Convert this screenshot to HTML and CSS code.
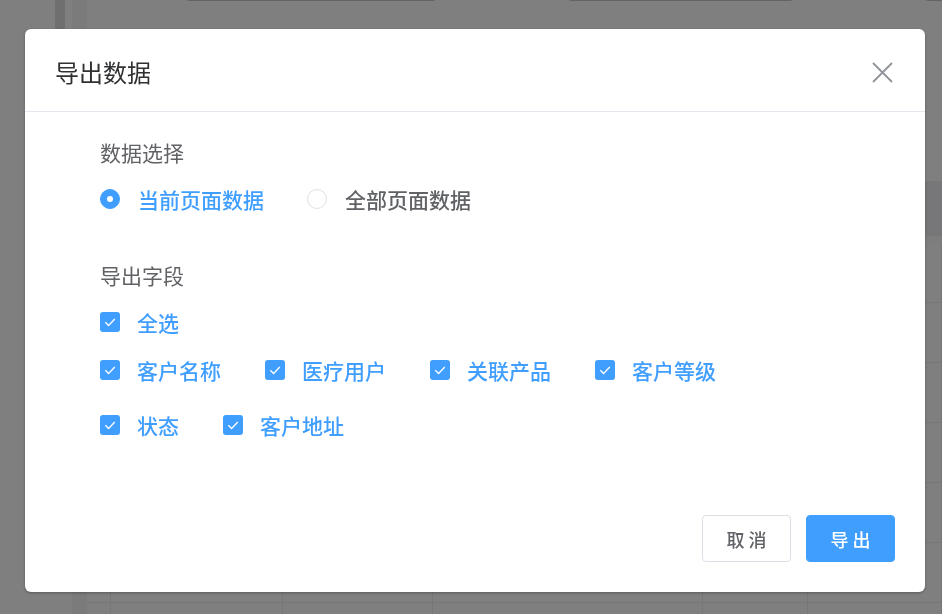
FILE: index.html
```html
<!DOCTYPE html>
<html>
    <head>
        <title>导出数据</title>
        <meta charset="UTF-8">
        <meta name="viewport" content="width=device-width, initial-scale=1.0">
        <link rel="stylesheet" href="styles.css">
    </head>
    <body>
        <!-- page behind the mask -->
        <div class="page">
            <div class="side-strip"></div>
            <div class="page-main">
                <div class="filters">
                    <div class="filter-input wide"></div>
                    <div class="filter-input mid"></div>
                    <div class="filter-input"></div>
                </div>
                <div class="table">
                    <div class="table-head"></div>
                    <div class="table-row"><span></span><span></span><span></span><span></span><span></span><span></span></div>
                    <div class="table-row"><span></span><span></span><span></span><span></span><span></span><span></span></div>
                    <div class="table-row"><span></span><span></span><span></span><span></span><span></span><span></span></div>
                    <div class="table-row"><span></span><span></span><span></span><span></span><span></span><span></span></div>
                    <div class="table-row"><span></span><span></span><span></span><span></span><span></span><span></span></div>
                    <div class="table-row"><span></span><span></span><span></span><span></span><span></span><span></span></div>
                    <div class="table-row"><span></span><span></span><span></span><span></span><span></span><span></span></div>
                </div>
            </div>
        </div>

        <div class="mask">
            <div class="dialog">
                <div class="dialog-header">
                    <span class="dialog-title">导出数据</span>
                    <button class="dialog-close" aria-label="关闭">
                        <svg width="21" height="21" viewBox="0 0 21 21">
                            <path d="M1 1 L20 20 M20 1 L1 20" stroke="#909399" stroke-width="1.8" fill="none"/>
                        </svg>
                    </button>
                </div>

                <div class="dialog-body">
                    <div class="field-label">数据选择</div>
                    <div class="radio-group">
                        <label class="radio checked"><span class="radio-inner"></span><span>当前页面数据</span></label>
                        <label class="radio"><span class="radio-inner"></span><span>全部页面数据</span></label>
                    </div>

                    <div class="field-label second">导出字段</div>
                    <div class="check-all">
                        <label class="checkbox"><span class="checkbox-inner"><svg width="20" height="20" viewBox="0 0 20 20"><polyline points="5.3,10.2 8.6,13.5 14.8,7" stroke="#fff" stroke-width="1.3" fill="none"/></svg></span><span>全选</span></label>
                    </div>
                    <div class="checkbox-group">
                        <label class="checkbox"><span class="checkbox-inner"><svg width="20" height="20" viewBox="0 0 20 20"><polyline points="5.3,10.2 8.6,13.5 14.8,7" stroke="#fff" stroke-width="1.3" fill="none"/></svg></span><span>客户名称</span></label>
                        <label class="checkbox"><span class="checkbox-inner"><svg width="20" height="20" viewBox="0 0 20 20"><polyline points="5.3,10.2 8.6,13.5 14.8,7" stroke="#fff" stroke-width="1.3" fill="none"/></svg></span><span>医疗用户</span></label>
                        <label class="checkbox"><span class="checkbox-inner"><svg width="20" height="20" viewBox="0 0 20 20"><polyline points="5.3,10.2 8.6,13.5 14.8,7" stroke="#fff" stroke-width="1.3" fill="none"/></svg></span><span>关联产品</span></label>
                        <label class="checkbox"><span class="checkbox-inner"><svg width="20" height="20" viewBox="0 0 20 20"><polyline points="5.3,10.2 8.6,13.5 14.8,7" stroke="#fff" stroke-width="1.3" fill="none"/></svg></span><span>客户等级</span></label>
                        <label class="checkbox"><span class="checkbox-inner"><svg width="20" height="20" viewBox="0 0 20 20"><polyline points="5.3,10.2 8.6,13.5 14.8,7" stroke="#fff" stroke-width="1.3" fill="none"/></svg></span><span>状态</span></label>
                        <label class="checkbox"><span class="checkbox-inner"><svg width="20" height="20" viewBox="0 0 20 20"><polyline points="5.3,10.2 8.6,13.5 14.8,7" stroke="#fff" stroke-width="1.3" fill="none"/></svg></span><span>客户地址</span></label>
                    </div>
                </div>

                <div class="dialog-footer">
                    <button class="btn">取 消</button>
                    <button class="btn btn-primary">导 出</button>
                </div>
            </div>
        </div>
    </body>
</html>
```

FILE: styles.css
```css
body {
    margin: 0;
    font-family: "Noto Sans CJK SC", "Noto Sans", sans-serif;
    background-color: #fff;
    overflow: hidden;
}

/* background page */
.page {
    display: flex;
    height: 614px;
    overflow: hidden;
}
.side-strip {
    align-self: flex-start;
    width: 10px;
    height: 30px;
    margin-left: 55px;
    background-color: #dedede;
}
.page-main {
    flex: 1;
    min-width: 0;
    overflow: hidden;
    padding-left: 15px;
    border-left: 7px solid #fff;
    background: linear-gradient(to right, #f7f7f7 0, #f7f7f7 15px, #fff 15px);
}
.filters {
    display: flex;
    gap: 130px;
    margin-top: -39px;
    padding-left: 98px;
}
.filter-input {
    flex: none;
    width: 250px;
    height: 38px;
    border: 1px solid #c8c8c8;
    border-radius: 4px;
    background-color: #fff;
}
.filter-input.mid {
    width: 225px;
}
.filter-input:last-child {
    width: 200px;
}
.table {
    margin-top: 180px;
}
.table-head {
    height: 55px;
    background-color: #eeeff2;
    border-bottom: 7px solid #fbfbfb;
}
.table-row {
    display: grid;
    grid-template-columns: 24px 172px 150px 270px 105px 1fr;
    height: 60px;
    border-bottom: 1px solid #ebeef5;
    box-sizing: border-box;
}
.table-row span {
    border-right: 1px solid #ebeef5;
}

/* modal */
.mask {
    position: fixed;
    top: 0;
    left: 0;
    right: 0;
    bottom: 0;
    background-color: rgba(0, 0, 0, 0.5);
}
.dialog {
    margin: 29px 0 0 25px;
    width: 900px;
    height: 563px;
    background-color: #fff;
    border-radius: 6px;
    box-shadow: 0 1px 3px rgba(0, 0, 0, 0.3);
    display: flex;
    flex-direction: column;
    box-sizing: border-box;
}
.dialog-header {
    display: flex;
    justify-content: space-between;
    align-items: center;
    padding: 27px 32px 23px 30px;
    border-bottom: 1px solid #e4e7ed;
}
.dialog-title {
    font-size: 24px;
    line-height: 32px;
    color: #303133;
}
.dialog-close {
    border: none;
    background: transparent;
    padding: 0;
    width: 21px;
    height: 21px;
    cursor: pointer;
    display: flex;
}
.dialog-body {
    flex: 1;
    padding: 25px 75px 0;
}
.field-label {
    font-size: 21px;
    line-height: 30px;
    color: #606266;
}
.field-label.second {
    margin-top: 46px;
}
.radio-group {
    display: flex;
    margin-top: 17px;
}
.radio {
    display: flex;
    align-items: center;
    gap: 18px;
    margin-right: 43px;
    font-size: 21px;
    line-height: 30px;
    font-weight: 500;
    color: #606266;
    cursor: pointer;
}
.radio-inner {
    width: 20px;
    height: 20px;
    border: 1px solid #dcdfe6;
    border-radius: 50%;
    box-sizing: border-box;
    display: flex;
    align-items: center;
    justify-content: center;
}
.radio.checked {
    color: #409eff;
}
.radio.checked .radio-inner {
    background-color: #409eff;
    border-color: #409eff;
}
.radio.checked .radio-inner::after {
    content: "";
    width: 6px;
    height: 6px;
    border-radius: 50%;
    background-color: #fff;
}
.check-all {
    display: flex;
    margin-top: 17px;
}
.checkbox-group {
    display: flex;
    flex-wrap: wrap;
    row-gap: 25px;
    margin-top: 18px;
}
.checkbox {
    display: flex;
    align-items: center;
    gap: 17px;
    margin-right: 44px;
    font-size: 21px;
    line-height: 30px;
    font-weight: 500;
    color: #409eff;
    cursor: pointer;
}
.checkbox-inner {
    width: 20px;
    height: 20px;
    border-radius: 3px;
    background-color: #409eff;
    display: flex;
}
.dialog-footer {
    display: flex;
    justify-content: flex-end;
    gap: 15px;
    padding: 0 30px 30px;
}
.btn {
    width: 89px;
    height: 47px;
    border: 1px solid #dcdfe6;
    border-radius: 4px;
    background-color: #fff;
    color: #606266;
    font-family: "Noto Sans CJK SC", sans-serif;
    font-size: 18px;
    font-weight: 500;
    cursor: pointer;
}
.btn-primary {
    background-color: #409eff;
    border-color: #409eff;
    color: #fff;
}
```
